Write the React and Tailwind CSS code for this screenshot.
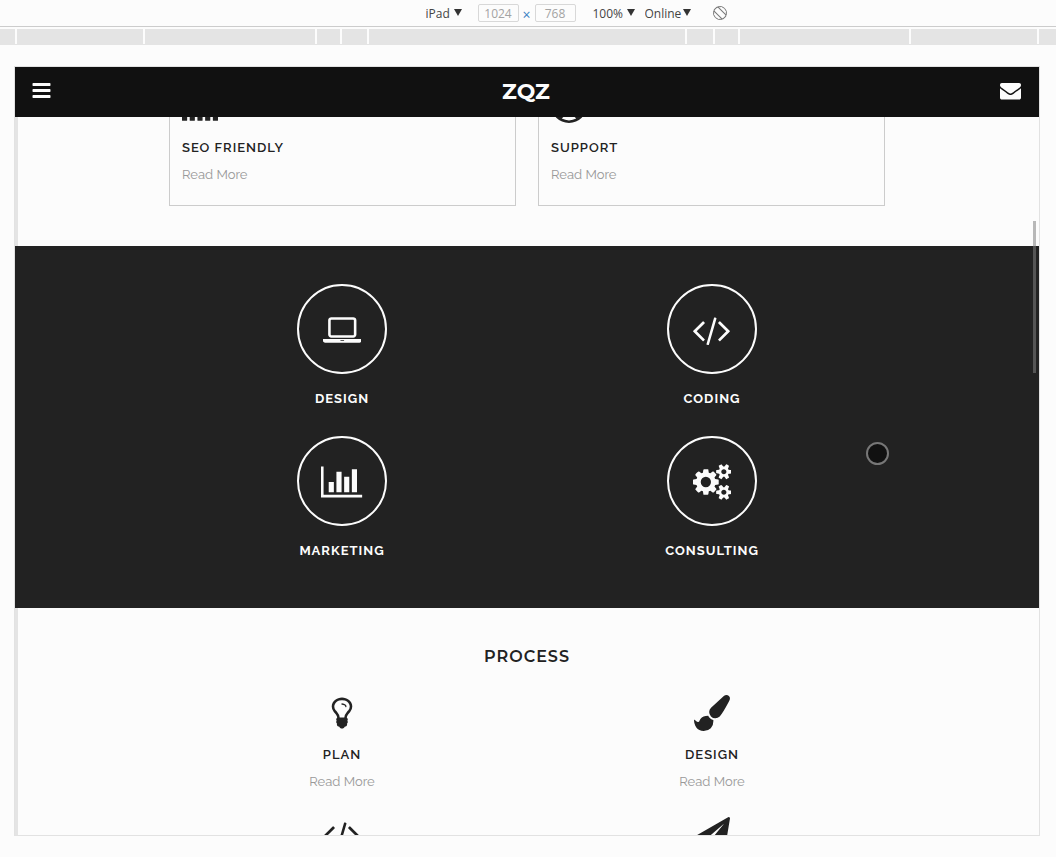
import clsx from "clsx";

const ICONS = {
  bars: {
    box: "0 0 1792 1792",
    d: "M1664 1344v128q0 26-19 45t-45 19h-1408q-26 0-45-19t-19-45v-128q0-26 19-45t45-19h1408q26 0 45 19t19 45zm0-512v128q0 26-19 45t-45 19h-1408q-26 0-45-19t-19-45v-128q0-26 19-45t45-19h1408q26 0 45 19t19 45zm0-512v128q0 26-19 45t-45 19h-1408q-26 0-45-19t-19-45v-128q0-26 19-45t45-19h1408q26 0 45 19t19 45z",
  },
  envelope: {
    box: "0 0 1792 1792",
    d: "M1792 710v794q0 66-47 113t-113 47h-1472q-66 0-113-47t-47-113v-794q44 49 101 87 362 246 497 345 57 42 92.5 65.5t94.5 48 110 24.5h2q51 0 110-24.5t94.5-48 92.5-65.5q170-123 498-345 57-39 100-87zm0-294q0 79-49 151t-122 123q-376 261-468 325-10 7-42.5 31t-54 38.5-52 32.5-57.5 27-50 9h-2q-23 0-50-9t-57.5-27-52-32.5-54-38.5-42.5-31q-91-64-262-182.5t-205-142.5q-62-42-117-115.5t-55-136.5q0-78 41.5-130t118.5-52h1472q65 0 112.5 47t47.500 113z",
  },
  signal: {
    box: "0 0 1792 1792",
    d: "M256 1312v192q0 14-9 23t-23 9h-192q-14 0-23-9t-9-23v-192q0-14 9-23t23-9h192q14 0 23 9t9 23zm384-128v320q0 14-9 23t-23 9h-192q-14 0-23-9t-9-23v-320q0-14 9-23t23-9h192q14 0 23 9t9 23zm384-256v576q0 14-9 23t-23 9h-192q-14 0-23-9t-9-23v-576q0-14 9-23t23-9h192q14 0 23 9t9 23zm384-384v960q0 14-9 23t-23 9h-192q-14 0-23-9t-9-23v-960q0-14 9-23t23-9h192q14 0 23 9t9 23zm384-512v1472q0 14-9 23t-23 9h-192q-14 0-23-9t-9-23v-1472q0-14 9-23t23-9h192q14 0 23 9t9 23z",
  },
  lifeRing: {
    box: "0 150 1792 1792",
    d: "M896 0q182 0 348 71t286 191 191 286 71 348-71 348-191 286-286 191-348 71-348-71-286-191-191-286-71-348 71-348 191-286 286-191 348-71zm0 128q-190 0-361 90l194 194q82-28 167-28t167 28l194-194q-171-90-361-90zm-678 1129l194-194q-28-82-28-167t28-167l-194-194q-90 171-90 361t90 361zm678 407q190 0 361-90l-194-194q-82 28-167 28t-167-28l-194 194q171 90 361 90zm0-384q159 0 271.5-112.5t112.5-271.5-112.5-271.5-271.5-112.5-271.5 112.5-112.5 271.5 112.5 271.5 271.5 112.5zm484-217l194 194q90-171 90-361t-90-361l-194 194q28 82 28 167t-28 167z",
  },
  laptop: {
    box: "0 0 1920 1792",
    d: "M416 1280q-66 0-113-47t-47-113v-704q0-66 47-113t113-47h1088q66 0 113 47t47 113v704q0 66-47 113t-113 47h-1088zm-32-864v704q0 13 9.5 22.5t22.5 9.5h1088q13 0 22.5-9.5t9.5-22.5v-704q0-13-9.5-22.5t-22.5-9.5h-1088q-13 0-22.5 9.5t-9.5 22.5zm1376 928h160v96q0 40-47 68t-113 28h-1600q-66 0-113-28t-47-68v-96h1760zm-720 96q16 0 16-16t-16-16h-160q-16 0-16 16t16 16h160z",
  },
  code: {
    box: "-24 0 1920 1792",
    d: "M553 1399l-50 50q-10 10-23 10t-23-10l-466-466q-10-10-10-23t10-23l466-466q10-10 23-10t23 10l50 50q10 10 10 23t-10 23l-393 393 393 393q10 10 10 23t-10 23zm591-1067l-373 1291q-4 13-15.5 19.5t-23.5 2.5l-62-17q-13-4-19.5-15.5t-2.5-24.5l373-1291q4-13 15.5-19.5t23.5-2.5l62 17q13 4 19.5 15.5t2.5 24.5zm657 651l-466 466q-10 10-23 10t-23-10l-50-50q-10-10-10-23t10-23l393-393-393-393q-10-10-10-23t10-23l50-50q10-10 23-10t23 10l466 466q10 10 10 23t-10 23z",
  },
  chart: {
    box: "0 0 2048 1792",
    d: "M640 896v512h-256v-512h256zm384-512v1024h-256v-1024h256zm1024 1152v128h-2048v-1536h128v1408h1920zm-640-896v768h-256v-768h256zm384-384v1152h-256v-1152h256z",
  },
  cogs: {
    box: "0 0 1920 1792",
    d: "M896 896q0-106-75-181t-181-75-181 75-75 181 75 181 181 75 181-75 75-181zm768 512q0-52-38-90t-90-38-90 38-38 90q0 53 37.5 90.5t90.5 37.5 90.5-37.5 37.5-90.5zm0-1024q0-52-38-90t-90-38-90 38-38 90q0 53 37.5 90.5t90.5 37.5 90.5-37.5 37.5-90.5zm-384 421v185q0 10-7 19.5t-16 10.5l-155 24q-11 35-32 76 34 48 90 115 7 11 7 20 0 12-7 19-23 30-82.5 89.5t-78.5 59.5q-11 0-21-7l-115-90q-37 19-77 31-11 108-23 155-7 24-30 24h-186q-11 0-20-7.5t-10-17.5l-23-153q-34-10-75-31l-118 89q-7 7-20 7-11 0-21-8-144-133-144-160 0-9 7-19 10-14 41-53t47-61q-23-44-35-82l-152-24q-10-1-17-9.5t-7-19.5v-185q0-10 7-19.5t16-10.5l155-24q11-35 32-76-34-48-90-115-7-11-7-20 0-12 7-20 22-30 82-89t79-59q11 0 21 7l115 90q34-18 77-32 11-108 23-154 7-24 30-24h186q11 0 20 7.5t10 17.5l23 153q34 10 75 31l118-89q8-7 20-7 11 0 21 8 144 133 144 160 0 8-7 19-12 16-42 54t-45 60q23 48 34 82l152 23q10 2 17 10.5t7 19.5zm640 533v140q0 16-149 31-12 27-30 52 51 113 51 138 0 4-4 7-122 71-124 71-8 0-46-47t-52-68q-20 2-30 2t-30-2q-14 21-52 68t-46 47q-2 0-124-71-4-3-4-7 0-25 51-138-18-25-30-52-149-15-149-31v-140q0-16 149-31 13-29 30-52-51-113-51-138 0-4 4-7 4-2 35-20t59-34 30-16q8 0 46 46.5t52 67.5q20-2 30-2t30 2q51-71 92-112l6-2q4 0 124 70 4 3 4 7 0 25-51 138 17 23 30 52 149 15 149 31zm0-1024v140q0 16-149 31-12 27-30 52 51 113 51 138 0 4-4 7-122 71-124 71-8 0-46-47t-52-68q-20 2-30 2t-30-2q-14 21-52 68t-46 47q-2 0-124-71-4-3-4-7 0-25 51-138-18-25-30-52-149-15-149-31v-140q0-16 149-31 13-29 30-52-51-113-51-138 0-4 4-7 4-2 35-20t59-34 30-16q8 0 46 46.5t52 67.5q20-2 30-2t30 2q51-71 92-112l6-2q4 0 124 70 4 3 4 7 0 25-51 138 17 23 30 52 149 15 149 31z",
  },
  bulb: {
    box: "0 0 1792 1792",
    d: "M1120 576q0 13-9.5 22.5t-22.5 9.5-22.5-9.5-9.5-22.5q0-46-54-71t-106-25q-13 0-22.5-9.5t-9.5-22.5 9.5-22.5 22.5-9.5q50 0 99.5 16t87 54 37.5 90zm160 0q0-72-34.5-134t-90-101.5-123-62-136.5-22.5-136.5 22.5-123 62-90 101.5-34.5 134q0 101 68 180 10 11 30.5 33t30.5 33q128 153 141 298h228q13-145 141-298 10-11 30.5-33t30.5-33q68-79 68-180zm128 0q0 155-103 268-45 49-74.5 87t-59.5 95.5-34 107.5q47 28 47 82 0 37-25 64 25 27 25 64 0 52-45 81 13 23 13 47 0 46-31.5 71t-77.5 25q-20 44-60 70t-87 26-87-26-60-70q-46 0-77.5-25t-31.5-71q0-24 13-47-45-29-45-81 0-37 25-64-25-27-25-64 0-54 47-82-4-50-34-107.5t-59.5-95.5-74.5-87q-103-113-103-268 0-99 44.5-184.5t117-142 164-89 186.5-32.5 186.5 32.5 164 89 117 142 44.5 184.5z",
  },
  brush: {
    box: "0 0 1792 1792",
    d: "M1615 0q70 0 122.5 46.5t52.5 116.5q0 63-45 151-332 629-465 752-97 91-218 91-126 0-216.5-92.5t-90.5-219.5q0-128 92-212l638-579q59-54 130-54zm-909 1034q39 76 106.5 130t150.5 76l1 71q4 213-129.5 347t-348.5 134q-123 0-218-46.5t-152.5-127.5-86.5-183-29-220q7 5 41 30t62 44.5 59 36.5 46 17q41 0 55-37 25-66 57.5-112.5t69.5-76 88-47.5 103-25.5 125-10.5z",
  },
  plane: {
    box: "0 0 1792 1792",
    d: "M1764 11q33 24 27 64l-256 1536q-5 29-32 45-14 8-31 8-11 0-24-5l-453-185-242 295q-18 23-49 23-13 0-22-4-19-7-30.5-23.5t-11.5-36.5v-349l864-1059-1069 925-395-162q-37-14-40-55-2-40 32-59l1664-960q15-9 32-9 20 0 36 11z",
  },
};

// Widths of the breakpoint segments under the toolbar
const SEGMENTS = [15, 126, 170, 23, 25, 316, 26, 23, 169, 126, 17];

const FEATURES = [
  { icon: "signal", title: "SEO FRIENDLY" },
  { icon: "lifeRing", title: "SUPPORT" },
];

const SERVICES = [
  { icon: "laptop", title: "DESIGN" },
  { icon: "code", title: "CODING" },
  { icon: "chart", title: "MARKETING" },
  { icon: "cogs", title: "CONSULTING" },
];

const STEPS = [
  { icon: "bulb", title: "PLAN" },
  { icon: "brush", title: "DESIGN" },
  { icon: "code" },
  { icon: "plane" },
];

function Icon({ name, className = "h-9" }) {
  const icon = ICONS[name];
  return (
    <svg viewBox={icon.box} className={clsx("w-auto shrink-0", className)} fill="currentColor" aria-hidden="true">
      <path d={icon.d} />
    </svg>
  );
}

function ToolbarSelect({ label, value, className }) {
  return (
    <div className={clsx("relative pt-0.5", className)}>
      <select
        aria-label={label}
        defaultValue={value}
        className="block w-full appearance-none bg-transparent text-[#444] outline-none"
      >
        <option>{value}</option>
      </select>
      <svg viewBox="0 0 8 7" className="pointer-events-none absolute right-0 top-[5px] h-[7px] w-2" fill="#333">
        <path d="M0 0h8L4 7z" />
      </svg>
    </div>
  );
}

function Toolbar() {
  const field = "h-[18px] w-[41px] rounded-xs border border-[#d8d8d8] bg-transparent text-center text-[#a3a3a3] outline-none";
  return (
    <div className="flex h-[27px] shrink-0 items-center justify-center border-b border-[#ccc] pl-24 font-['Open_Sans',sans-serif] text-xs leading-4">
      <ToolbarSelect label="Device" value="iPad" className="mr-4 w-9" />
      <input aria-label="Width" defaultValue="1024" className={field} />
      <span className="w-4 pt-1 text-center text-sm leading-4 text-[#3b82c4]">×</span>
      <input aria-label="Height" defaultValue="768" className={field} />
      <ToolbarSelect label="Zoom" value="100%" className="ml-[17px] w-[42px]" />
      <ToolbarSelect label="Throttling" value="Online" className="ml-2.5 w-[46px]" />
      <button aria-label="Rotate" className="ml-[22px]">
        <svg viewBox="0 0 14 14" className="size-3.5" fill="none" stroke="#777">
          <rect x="4.200" y="0.700" width="5.600" height="12.600" rx="1.500" transform="rotate(-45 7 7)" />
          <path d="M5 .8A6.500 6.500 0 0 1 13.200 9M9 13.200A6.500 6.500 0 0 1 .8 5" />
        </svg>
      </button>
    </div>
  );
}

function Title({ children, className }) {
  return (
    <h3 className={clsx("font-['Raleway','Inter',sans-serif] text-[13px] leading-5 tracking-[1px]", className)}>
      {children}
    </h3>
  );
}

function ReadMore() {
  return (
    <a href="#more" className="mt-[7px] font-['Raleway','Inter',sans-serif] text-[13px] leading-5 text-[#999]">
      Read More
    </a>
  );
}

export default function App() {
  return (
    <div className="flex h-screen flex-col overflow-hidden bg-[#fcfcfc] font-['Montserrat','Inter',sans-serif] text-[#222]">
      <Toolbar />

      {/* Media query bar */}
      <div className="mt-0.5 flex h-4 shrink-0 gap-0.5 border-b border-[#e4e4e4]">
        {SEGMENTS.map((size, i) => (
          <div key={i} className="bg-[#e4e4e4]" style={{ flex: `${size} 1 0px` }} />
        ))}
      </div>

      {/* Device viewport */}
      <div className="relative mt-[21px] mb-[21px] ml-3.5 mr-4 flex min-h-0 flex-1 flex-col overflow-hidden border border-[#e2e2e2]">
        <header className="flex h-[50px] shrink-0 items-center justify-between bg-[#111] pr-[18px] pl-4 text-[#fcfcfc]">
          <button aria-label="Menu" className="pb-[3px]">
            <Icon name="bars" className="h-[21px]" />
          </button>
          <h1 className="text-[22px] font-bold leading-6">ZQZ</h1>
          <button aria-label="Contact" className="pb-[3px]">
            <Icon name="envelope" className="h-[21px]" />
          </button>
        </header>

        <section className="flex h-[129px] shrink-0 items-end justify-center overflow-hidden border-l-3 border-[#e4e4e4] pr-[3px] pb-10">
          <div className="grid w-[716px] grid-cols-2 gap-[22px]">
            {FEATURES.map(({ icon, title }) => (
              <article key={title} className="flex flex-col items-start border border-[#ccc] px-3 pt-5 pb-5">
                <Icon name={icon} />
                <Title className="mt-3 font-semibold">{title}</Title>
                <ReadMore />
              </article>
            ))}
          </div>
        </section>

        <section className="flex shrink-0 justify-center bg-[#222] pt-[38px] pb-[47px] text-[#fcfcfc]">
          <div className="grid w-[740px] grid-cols-2 gap-y-[27px]">
            {SERVICES.map(({ icon, title }) => (
              <article key={title} className="flex flex-col items-center">
                <div className="flex size-[90px] items-center justify-center rounded-full border-2 border-[#fcfcfc] pt-0.5">
                  <Icon name={icon} />
                </div>
                <Title className="mt-[15px] font-bold">{title}</Title>
              </article>
            ))}
          </div>
        </section>

        <section className="flex shrink-0 flex-col items-center border-l-3 border-[#e4e4e4] pt-[37px] pr-[3px]">
          <h2 className="text-base font-semibold leading-6 tracking-[1px]">PROCESS</h2>
          <div className="mt-[26px] grid w-[740px] grid-cols-2 gap-y-[25px]">
            {STEPS.map(({ icon, title }) => (
              <article key={icon} className="flex flex-col items-center">
                <Icon name={icon} />
                {title && (
                  <>
                    <Title className="mt-3.5 font-semibold">{title}</Title>
                    <ReadMore />
                  </>
                )}
              </article>
            ))}
          </div>
        </section>

        {/* Scroll thumb and touch pointer */}
        <div className="absolute right-[3px] top-[154px] h-[152px] w-[3px] bg-[#808080]/55" />
        <div className="absolute right-[150px] top-[375px] size-[23px] rounded-full border-2 border-[#777] bg-[#111]" />
      </div>
    </div>
  );
}
